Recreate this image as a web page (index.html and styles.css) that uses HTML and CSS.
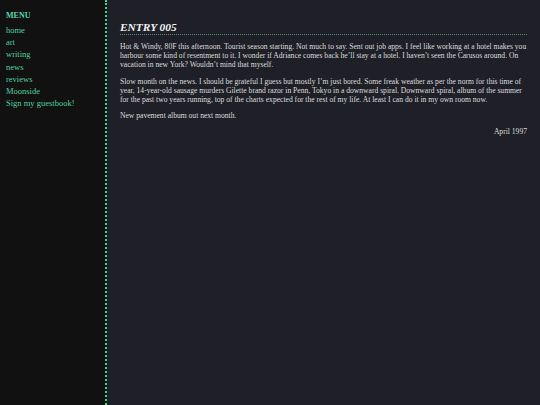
FILE: index.html
```html
<!DOCTYPE html>
<html>
<head>
<meta charset="utf-8">
<link rel="stylesheet" href="styles.css">
</head>
<body>
<div class="layout">
  <nav class="sidebar">
    <div class="menu-title">MENU</div>
    <ul class="menu">
      <li><a href="#">home</a></li>
      <li><a href="#">art</a></li>
      <li><a href="#">writing</a></li>
      <li><a href="#">news</a></li>
      <li><a href="#">reviews</a></li>
      <li><a href="#">Moonside</a></li>
      <li><a href="#">Sign my guestbook!</a></li>
    </ul>
  </nav>
  <main class="content">
    <h2 class="entry-title">ENTRY 005</h2>
    <p>Hot &amp; Windy, 80F this afternoon. Tourist season starting. Not much to say. Sent out job apps. I feel like working at a hotel makes you harbour some kind of resentment to it. I wonder if Adriance comes back he’ll stay at a hotel. I haven’t seen the Carusos around. On vacation in new York? Wouldn’t mind that myself.</p>
    <p>Slow month on the news. I should be grateful I guess but mostly I’m just bored. Some freak weather as per the norm for this time of year, 14-year-old sausage murders Gilette brand razor in Penn, Tokyo in a downward spiral. Downward spiral, album of the summer for the past two years running, top of the charts expected for the rest of my life. At least I can do it in my own room now.</p>
    <p>New pavement album out next month.</p>
    <p class="date">April 1997</p>
  </main>
</div>
</body>
</html>
```

FILE: styles.css
```css
html, body {
  margin: 0;
  padding: 0;
  background: #1f2027;
}
body {
  font-family: "Liberation Serif", "Times New Roman", serif;
}
.layout {
  display: flex;
  min-height: 100vh;
}
.sidebar {
  width: 99px;
  flex: 0 0 99px;
  background: #111112;
  border-right: 2px dotted #2fe08a;
  padding: 10px 0 0 6px;
}
.menu-title {
  color: #55d6a6;
  font-weight: bold;
  font-size: 8px;
  line-height: 12px;
  margin-bottom: 2px;
}
.menu {
  list-style: none;
  margin: 0;
  padding: 0;
}
.menu li {
  font-size: 8.5px;
  line-height: 12.2px;
}
.menu a {
  color: #4fd09e;
  text-decoration: none;
}
.content {
  flex: 1;
  padding: 20px 13px;
  color: #dcdcdc;
  font-size: 7.6px;
  line-height: 9.2px;
}
.entry-title {
  margin: 0;
  font-size: 11.4px;
  line-height: 14px;
  font-style: italic;
  font-weight: bold;
  color: #f2f2f2;
  border-bottom: 1px dotted #4a8a68;
}
.content p {
  margin: 7px 0;
}
.content .date {
  text-align: right;
}
```
